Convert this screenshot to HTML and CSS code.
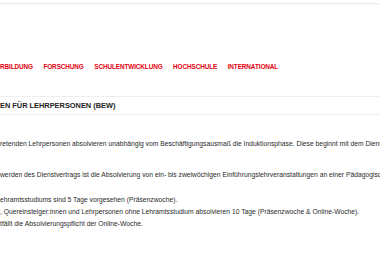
FILE: index.html
```
<!DOCTYPE html>
<html>
<head>
    <title>Berufseinstieg</title>
    <link rel="stylesheet" href="styles.css">
</head>
<body>
    <header class="top-bar"></header>

    <nav class="main-nav">
        <a href="#">RBILDUNG</a>
        <a href="#">FORSCHUNG</a>
        <a href="#">SCHULENTWICKLUNG</a>
        <a href="#">HOCHSCHULE</a>
        <a href="#">INTERNATIONAL</a>
    </nav>

    <div class="page-title">
        <h1>EN FÜR LEHRPERSONEN (BEW)</h1>
    </div>

    <div class="content">
        <p class="intro">retenden Lehrpersonen absolvieren unabhängig vom Beschäftigungsausmaß die Induktionsphase. Diese beginnt mit dem Dienstantritt.</p>
        <p class="intro">werden des Dienstvertrags ist die Absolvierung von ein- bis zweiwöchigen Einführungslehrveranstaltungen an einer Pädagogischen Hochschule.</p>
        <ul class="rules">
            <li>ehramtsstudiums sind 5 Tage vorgesehen (Präsenzwoche).</li>
            <li>, Quereinsteiger:innen und Lehrpersonen ohne Lehramtsstudium absolvieren 10 Tage (Präsenzwoche &amp; Online-Woche).</li>
            <li>tfällt die Absolvierungspflicht der Online-Woche.</li>
        </ul>
    </div>
</body>
</html>
```
FILE: styles.css
```
* {
    margin: 0;
    padding: 0;
    box-sizing: border-box;
}

body {
    width: 380px;
    height: 255px;
    overflow: hidden;
    background: #fff;
    font-family: 'Liberation Sans', Arial, sans-serif;
}

.top-bar {
    height: 4px;
    border-bottom: 1px solid #ececec;
    box-shadow: 0 1px 2px rgba(0, 0, 0, 0.04);
}

.main-nav {
    display: flex;
    gap: 10.5px;
    margin-top: 57px;
    height: 10px;
    align-items: center;
    white-space: nowrap;
    overflow: hidden;
}

.main-nav a {
    color: #e3000f;
    text-decoration: none;
    font-size: 6.4px;
    font-weight: bold;
    letter-spacing: -0.1px;
}

.page-title {
    margin-top: 25px;
    border-top: 1px solid #efefef;
    border-bottom: 1px solid #efefef;
    height: 19px;
    display: flex;
    align-items: center;
}

.page-title h1 {
    font-size: 7.4px;
    font-weight: bold;
    color: #222;
    white-space: nowrap;
}

.content {
    padding-top: 24px;
    color: #2b2b2b;
    font-size: 6.75px;
    white-space: nowrap;
    overflow: hidden;
}

.intro {
    line-height: 10px;
    margin-bottom: 21px;
}

.rules {
    list-style: none;
    margin-top: -7px;
}

.rules li {
    line-height: 12px;
}
```
